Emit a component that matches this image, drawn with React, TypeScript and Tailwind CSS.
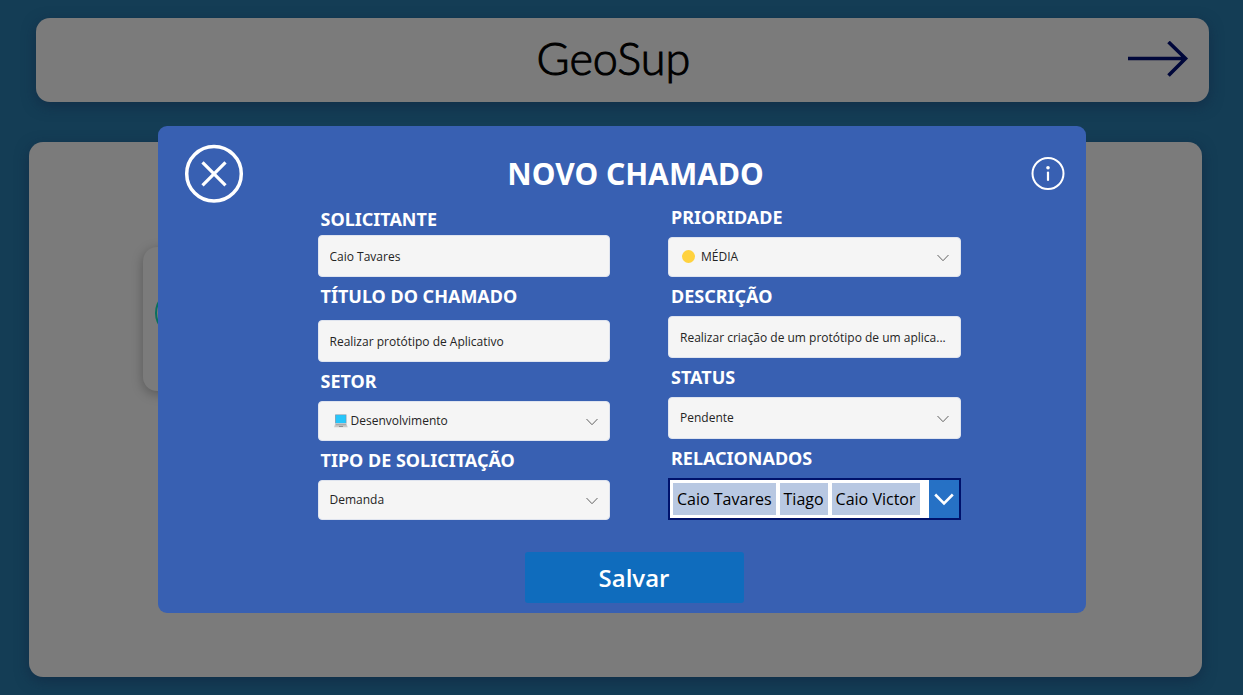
import { ReactNode } from "react";

const labelClass =
  "block h-6 pl-[3px] font-['Noto_Sans','Open_Sans',sans-serif] text-[18px] leading-6 font-bold text-white";
const controlClass =
  "block w-full appearance-none rounded-[4px] border border-[#dfe4ef] bg-[#f5f5f5] px-[11px] text-[12px] text-[#242424]";

function Chevron() {
  return (
    <svg
      className="pointer-events-none absolute top-1/2 right-3 mt-[-5px] h-3 w-3"
      viewBox="0 0 12 12"
      fill="none"
      stroke="#616161"
      strokeWidth="1"
      strokeLinecap="round"
      strokeLinejoin="round"
    >
      <path d="M0.8 3.3 6 8.7l5.2-5.4" />
    </svg>
  );
}

type FieldProps = { id: string; label: string; gap: string; children: ReactNode };

function Field({ id, label, gap, children }: FieldProps) {
  return (
    <div className={`flex flex-col ${gap}`}>
      <label htmlFor={id} className={labelClass}>
        {label}
      </label>
      <div className="relative">{children}</div>
    </div>
  );
}

function Laptop() {
  return (
    <svg className="pointer-events-none absolute top-1/2 left-4 mt-[-7px] h-[14px] w-[14px]" viewBox="0 0 14 14">
      <path d="M1.2.5h11.2v9H1.2z" fill="#6f8fa6" />
      <path d="M1.8 1.1h10v7.9h-10z" fill="#26c6fb" />
      <path d="M1.2 9.5h11.2l1.3 3.8H.1z" fill="#c9c9c9" />
      <path d="M2 10.1h9.8l.5 1.2H1.5z" fill="#a9a9a9" />
      <path d="M5 11.9h4v1H5z" fill="#8c8c8c" />
    </svg>
  );
}

export default function App() {
  return (
    <div className="relative min-h-screen bg-[#143d55] font-['Open_Sans','Noto_Sans',sans-serif]">
      <div className="flex min-h-screen flex-col gap-10 pt-[18px] pb-[18px]">
        <header className="mr-[34px] ml-9 grid h-[84px] grid-cols-[1fr_auto_1fr] items-center rounded-[14px] bg-[#7b7b7b] px-5 shadow-[0_4px_14px_rgba(16,36,64,0.6)]">
          <span />
          <h1 className="pr-[18px] pb-1 font-['Lato',sans-serif] text-[45px] leading-none font-light text-black [-webkit-text-stroke:1px_black]">
            GeoSup
          </h1>
          <button type="button" aria-label="Avançar" className="justify-self-end">
            <svg className="h-[38px] w-[62px]" viewBox="0 0 62 38" fill="none" stroke="#00073a" strokeWidth="3.6">
              <path d="M1 17.5h58M41.5 1l17 16.5-17 17" />
            </svg>
          </button>
        </header>
        <main className="mr-[41px] ml-[29px] flex flex-1 items-start rounded-[14px] bg-[#7b7b7b] px-[114px] pt-[105px] shadow-[0_4px_14px_rgba(16,36,64,0.6)]">
          <div className="flex h-36 w-72 items-center rounded-[14px] bg-[#7b7b7b] px-3 shadow-[0_3px_12px_rgba(0,0,0,0.28)]">
            <span className="mb-3 h-12 w-12 rounded-full border-2 border-[#08705f]" />
          </div>
        </main>
      </div>

      <div className="absolute inset-0 flex items-start justify-center px-6 pt-[126px]">
        <section
          role="dialog"
          aria-labelledby="titulo-modal"
          className="w-full max-w-[928px] rounded-[9px] bg-[#3860b2] pt-[18px] pb-[10px]"
        >
          <div className="flex h-[60px] items-center justify-between pr-5 pl-[26px]">
            <button type="button" aria-label="Fechar">
              <svg className="h-[60px] w-[60px]" viewBox="0 0 60 60" fill="none" stroke="white" strokeWidth="3.5">
                <circle cx="30" cy="29.8" r="27.3" />
                <path d="M18.5 18.3l23 23M41.5 18.3l-23 23" strokeWidth="3.2" />
              </svg>
            </button>
            <h2
              id="titulo-modal"
              className="pr-1 font-['Noto_Sans','Open_Sans',sans-serif] text-[30px] leading-10 font-bold text-white"
            >
              NOVO CHAMADO
            </h2>
            <button type="button" aria-label="Informações">
              <svg className="h-[34px] w-[34px]" viewBox="0 0 34 34" fill="none" stroke="white">
                <circle cx="17" cy="16.5" r="15.5" strokeWidth="2" />
                <circle cx="17" cy="10.8" r="1.8" fill="white" stroke="none" />
                <path d="M17 15.5v7.5" strokeWidth="2.2" strokeLinecap="round" />
              </svg>
            </button>
          </div>

          <form>
            <div className="flex gap-[58px] pr-[125px] pl-40">
              <div className="flex flex-1 flex-col gap-[7px] pt-[3px]">
                <Field id="solicitante" label="SOLICITANTE" gap="gap-1">
                  <input id="solicitante" className={`${controlClass} h-[42px]`} defaultValue="Caio Tavares" />
                </Field>
                <Field id="titulo" label="TÍTULO DO CHAMADO" gap="gap-3">
                  <input
                    id="titulo"
                    className={`${controlClass} h-[42px]`}
                    defaultValue="Realizar protótipo de Aplicativo"
                  />
                </Field>
                <Field id="setor" label="SETOR" gap="gap-2">
                  <select id="setor" className={`${controlClass} h-10 pl-8`}>
                    <option>Desenvolvimento</option>
                  </select>
                  <Laptop />
                  <Chevron />
                </Field>
                <Field id="tipo" label="TIPO DE SOLICITAÇÃO" gap="gap-2">
                  <select id="tipo" className={`${controlClass} h-10`}>
                    <option>Demanda</option>
                  </select>
                  <Chevron />
                </Field>
              </div>

              <div className="flex flex-1 flex-col gap-[7px] pt-px">
                <Field id="prioridade" label="PRIORIDADE" gap="gap-2">
                  <select id="prioridade" className={`${controlClass} h-10 pl-8`}>
                    <option>MÉDIA</option>
                  </select>
                  <span className="pointer-events-none absolute top-1/2 left-3.5 mt-[-7px] h-[13px] w-[13px] rounded-full bg-[#ffd23e]" />
                  <Chevron />
                </Field>
                <Field id="descricao" label="DESCRIÇÃO" gap="gap-2">
                  <input
                    id="descricao"
                    className={`${controlClass} h-[42px]`}
                    defaultValue="Realizar criação de um protótipo de um aplica..."
                  />
                </Field>
                <Field id="status" label="STATUS" gap="gap-2">
                  <select id="status" className={`${controlClass} h-[42px]`}>
                    <option>Pendente</option>
                  </select>
                  <Chevron />
                </Field>
                <Field id="relacionados" label="RELACIONADOS" gap="gap-2">
                  <div className="flex h-[42px] border-2 border-[#00126b] bg-white text-[16px] text-black">
                    <div className="flex flex-1 items-center gap-1 pl-[3px] whitespace-nowrap">
                      <span className="bg-[#b8c8e2] px-1 leading-8">Caio Tavares</span>
                      <span className="bg-[#b8c8e2] px-1 leading-8">Tiago</span>
                      <span className="bg-[#b8c8e2] px-1 leading-8">Caio Victor</span>
                    </div>
                    <button
                      id="relacionados"
                      type="button"
                      className="flex w-[30px] items-center justify-center bg-[#2671c5]"
                    >
                      <svg className="h-5 w-5" viewBox="0 0 20 20" fill="none" stroke="white" strokeWidth="2.6">
                        <path d="M1.2 5.5 10 14.3l8.8-8.8" />
                      </svg>
                    </button>
                  </div>
                </Field>
              </div>
            </div>

            <div className="mt-8 flex justify-center pl-[25px]">
              <button
                type="submit"
                className="h-[51px] w-[219px] rounded-[3px] bg-[#0f6cbd] text-[24px] font-semibold text-white"
              >
                Salvar
              </button>
            </div>
          </form>
        </section>
      </div>
    </div>
  );
}
